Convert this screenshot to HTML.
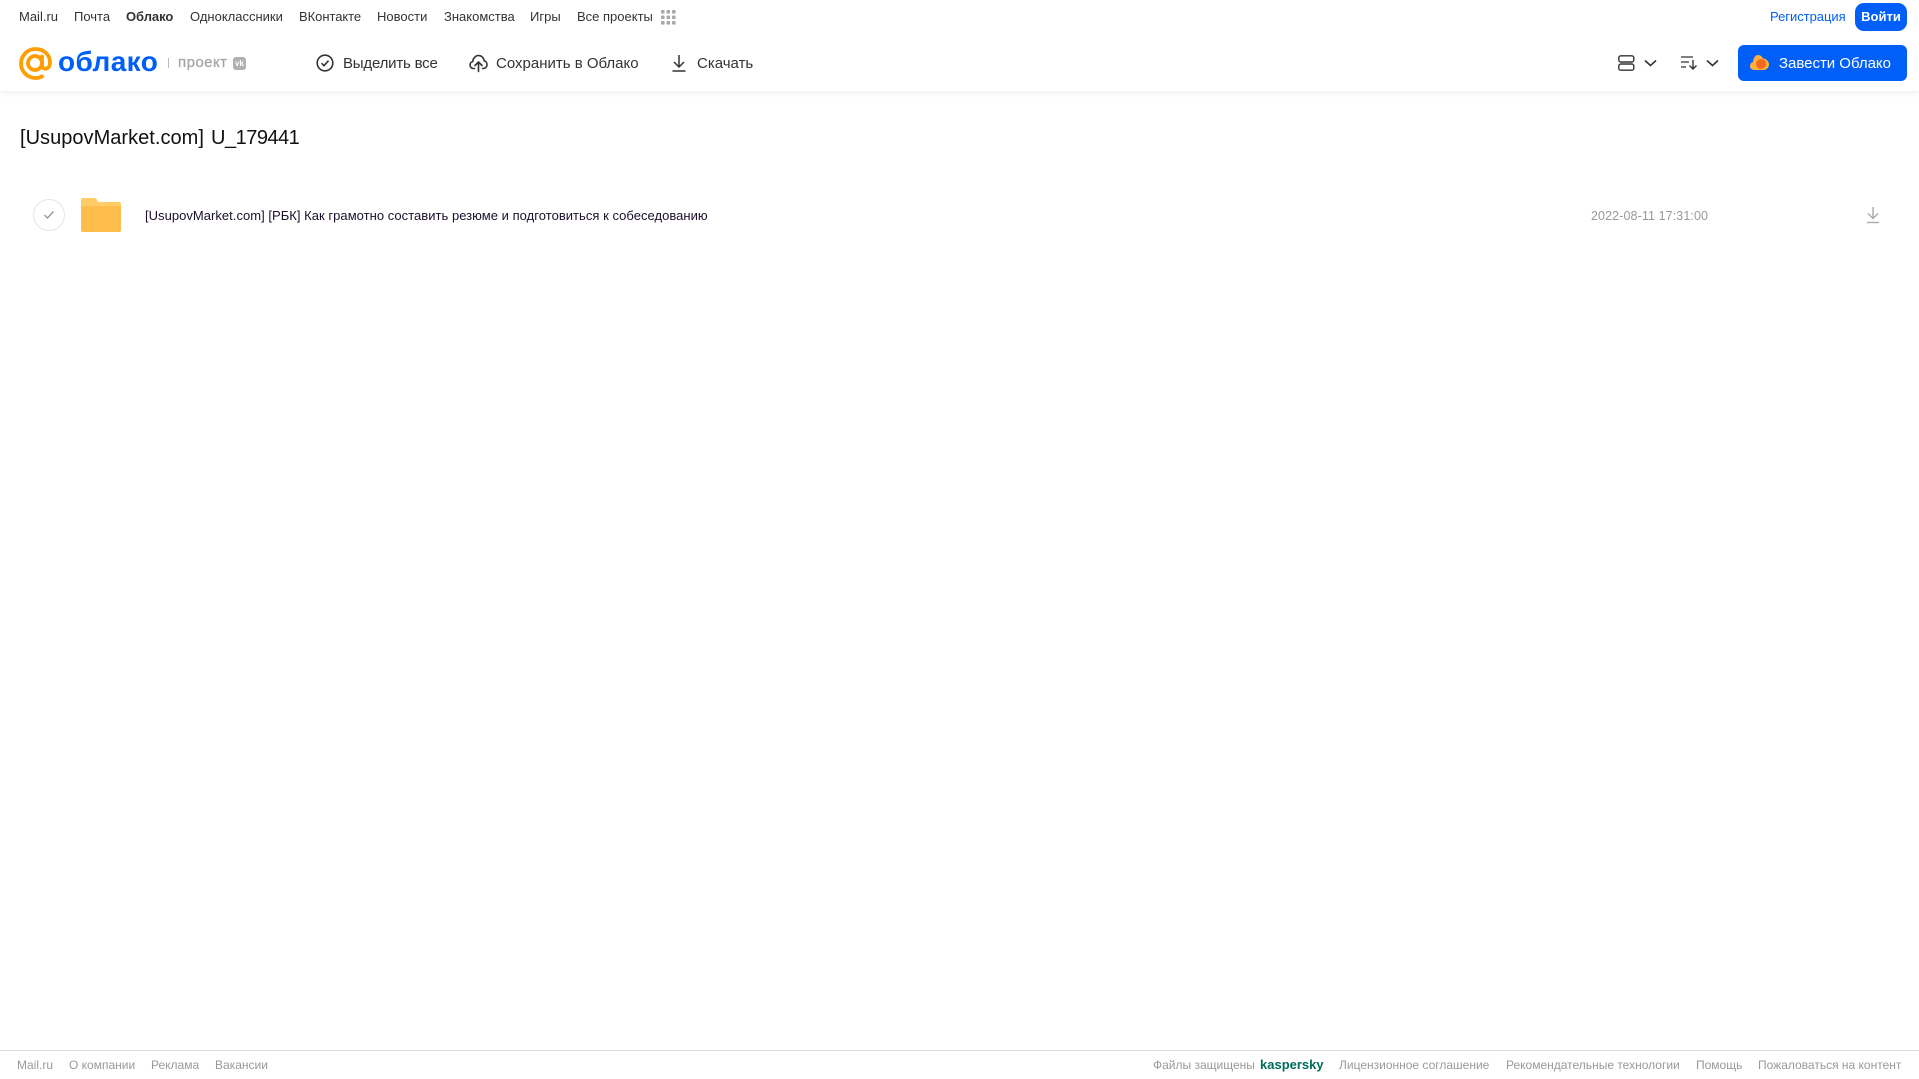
<!DOCTYPE html>
<html lang="ru"><head><meta charset="utf-8"><title>Облако</title>
<style>
html,body{margin:0;padding:0;background:#fff}
body{width:1919px;height:1079px;position:relative;overflow:hidden;font-family:"Liberation Sans","DejaVu Sans",sans-serif}
.t{position:absolute;white-space:nowrap;line-height:20px}
.n{top:7px;font-size:13px;color:#333}
.a{top:53.500px;font-size:15px;color:#333;line-height:20px}
.f{top:1055px;font-size:12px;color:#999}
svg{position:absolute;overflow:visible}
#hd{position:absolute;left:0;top:0;width:1919px;height:91px;background:#fff;box-shadow:0 2px 6px rgba(0,0,0,.07)}
</style></head><body>
<div id="hd"></div>
<span class="t n" style="left:19px">Mail.ru</span>
<span class="t n" style="left:74px">Почта</span>
<span class="t n" style="left:126px;font-weight:bold;letter-spacing:-.05px">Облако</span>
<span class="t n" style="left:190px">Одноклассники</span>
<span class="t n" style="left:299px;letter-spacing:-.05px">ВКонтакте</span>
<span class="t n" style="left:377px">Новости</span>
<span class="t n" style="left:444px">Знакомства</span>
<span class="t n" style="left:530px">Игры</span>
<span class="t n" style="left:577px">Все проекты</span>
<svg style="left:661px;top:10px" width="15" height="15" fill="#a8a8a8"><rect x="0" y="0" width="3.6" height="3.6" rx="1"/><rect x="5.5" y="0" width="3.6" height="3.6" rx="1"/><rect x="11" y="0" width="3.6" height="3.6" rx="1"/><rect x="0" y="5.5" width="3.6" height="3.6" rx="1"/><rect x="5.5" y="5.5" width="3.6" height="3.6" rx="1"/><rect x="11" y="5.5" width="3.6" height="3.6" rx="1"/><rect x="0" y="11" width="3.6" height="3.6" rx="1"/><rect x="5.5" y="11" width="3.6" height="3.6" rx="1"/><rect x="11" y="11" width="3.6" height="3.6" rx="1"/></svg>

<svg style="left:19px;top:47px" width="33" height="33" fill="none" stroke="#ff9e00" stroke-width="3.800" stroke-linecap="round"><circle cx="16" cy="16" r="7"/><path d="M23 9.500v8.500c0 5.500 8 5 8-2.500C31 7.500 24.500 2 16.500 2 8.500 2 2 8.500 2 16.500S8.500 31 16.500 31c2.500 0 4.500-.5 6.500-1.600"/></svg>
<span class="t" style="left:58px;top:44px;font-size:28px;line-height:36px;color:#005ff9;font-weight:bold;letter-spacing:.4px">облако</span>
<div style="position:absolute;left:168px;top:58px;width:1px;height:10px;background:#bbb"></div>
<span class="t" style="left:178px;top:53px;font-size:15px;color:#a5a5a5;letter-spacing:.45px;-webkit-text-stroke:.3px #a5a5a5">проект</span>
<div style="position:absolute;left:233px;top:57px;width:13px;height:13px;border-radius:3px;background:#b0b0b0;color:#fff;font:bold 8px/13px 'Liberation Sans',sans-serif;text-align:center">vk</div>

<svg style="left:316px;top:54px" width="18" height="18" fill="none" stroke="#333" stroke-width="1.600"><circle cx="9" cy="9" r="7.800"/><path d="M5.500 9.200l2.500 2.500 4.500-5"/></svg>
<span class="t a" style="left:343px;letter-spacing:-.2px">Выделить все</span>
<svg style="left:469px;top:54px" width="19" height="18" fill="none" stroke="#333" stroke-width="1.600" stroke-linecap="round" stroke-linejoin="round"><path d="M5.500 14.500H4.500C2.500 14.500 1 13 1 11c0-1.700 1.100-3 2.700-3.400C4.200 4 6.500 1.500 9.500 1.500c3 0 5.300 2.300 5.700 5.300 1.700.4 2.800 2 2.800 3.800 0 2.200-1.600 3.900-3.800 3.900h-.7"/><path d="M9.500 17.500V8.500M6 11.500l3.500-3.500 3.500 3.500"/></svg>
<span class="t a" style="left:496px">Сохранить в Облако</span>
<svg style="left:672px;top:54px" width="14" height="18" fill="none" stroke="#333" stroke-width="1.500"><path d="M7 1v11.500M2 8l5 5 5-5"/><path d="M.5 17h13"/></svg>
<span class="t a" style="left:697px">Скачать</span>

<svg style="left:1618px;top:55px" width="17" height="16" fill="none" stroke="#333" stroke-width="1.400"><rect x=".8" y=".8" width="15" height="6.200" rx="2"/><rect x=".8" y="9" width="15" height="6.200" rx="2"/></svg>
<svg style="left:1644px;top:59px" width="13" height="8" fill="none" stroke="#333" stroke-width="1.600"><path d="M1 1.500l5.500 5 5.500-5"/></svg>
<svg style="left:1681px;top:56px" width="17" height="14" fill="none" stroke="#333" stroke-width="1.200"><path d="M0 1h12M0 6h8M0 11h5"/><path d="M12 4v9M8.500 9.500L12 13l3.500-3.500" stroke-width="1.400"/></svg>
<svg style="left:1706px;top:59px" width="13" height="8" fill="none" stroke="#333" stroke-width="1.600"><path d="M1 1.500l5.500 5 5.500-5"/></svg>

<span class="t n" style="left:1770px;color:#005ff9;letter-spacing:-.03px">Регистрация</span>
<div style="position:absolute;left:1855px;top:3px;width:52px;height:28px;border-radius:9px;background:#005ff9;color:#fff;font:bold 13px/27px 'Liberation Sans',sans-serif;text-align:center">Войти</div>
<div style="position:absolute;left:1738px;top:45px;width:169px;height:36px;border-radius:6px;background:#005ff9"></div>
<svg style="left:1750px;top:54px" width="19" height="18"><path d="M4 16C1.500 16 0 14 0 12c0-2 1.300-3.500 3-4C3.500 3.500 5.500 1 8 1c2.500 0 4 1.500 5 3.500 3 .2 6 2.500 6 6 0 3-2.500 5.500-5.500 5.500z" fill="#ffb03a"/><circle cx="11" cy="10" r="5" fill="#f4691e"/></svg>
<span class="t a" style="left:1779px;color:#fff;letter-spacing:-.02px">Завести Облако</span>

<span class="t" style="left:20px;top:125px;font-size:20px;line-height:26px;color:#111;letter-spacing:.03px">[UsupovMarket.com]</span>
<span class="t" style="left:211px;top:125px;font-size:20px;line-height:26px;color:#111;letter-spacing:-.5px">U_179441</span>

<div style="position:absolute;left:33px;top:199px;width:30px;height:30px;border:1px solid #e6e6e6;border-radius:50%"></div>
<svg style="left:43px;top:210px" width="12" height="10" fill="none" stroke="#999" stroke-width="1.400"><path d="M1.500 5l3 3L10.500 1.500"/></svg>
<svg style="left:81px;top:198px" width="40" height="34"><path d="M2 0h11c1.500 0 2.500.8 3 2l1 2h21c1.200 0 2 .8 2 2v26c0 1.200-.8 2-2 2H2c-1.200 0-2-.8-2-2V2C0 .8.800 0 2 0z" fill="#ffcc66"/><path d="M0 8h40v24c0 1.200-.8 2-2 2H2c-1.200 0-2-.8-2-2z" fill="#ffbe4b"/></svg>
<span class="t" style="left:145px;top:206px;font-size:13px;color:#1c0f2e;letter-spacing:.03px">[UsupovMarket.com] [РБК] Как грамотно составить резюме и подготовиться к собеседованию</span>
<span class="t" style="left:1591px;top:206px;font-size:12.5px;color:#999;letter-spacing:.1px">2022-08-11 17:31:00</span>
<svg style="left:1866px;top:206px" width="14" height="18" fill="none" stroke="#aaa" stroke-width="1.400"><path d="M7 1v11M2 7.500l5 5 5-5"/><path d="M1 16.500h12"/></svg>

<div style="position:absolute;left:0;top:1050px;width:1919px;height:1px;background:#dcdcdc"></div>
<span class="t f" style="left:17px">Mail.ru</span>
<span class="t f" style="left:69px">О компании</span>
<span class="t f" style="left:151px">Реклама</span>
<span class="t f" style="left:215px">Вакансии</span>
<span class="t f" style="left:1153px">Файлы защищены</span>
<span class="t f" style="left:1260px;color:#006d5c;font-weight:bold;font-size:13px">kaspersky</span>
<span class="t f" style="left:1339px">Лицензионное соглашение</span>
<span class="t f" style="left:1506px">Рекомендательные технологии</span>
<span class="t f" style="left:1696px">Помощь</span>
<span class="t f" style="left:1758px">Пожаловаться на контент</span>
</body></html>
